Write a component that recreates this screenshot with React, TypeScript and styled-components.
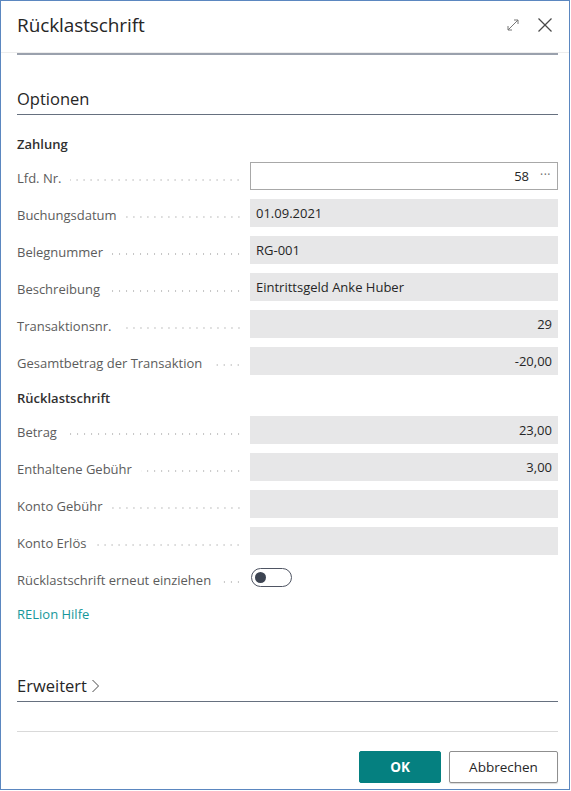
import styled, { createGlobalStyle } from 'styled-components';

const GlobalStyle = createGlobalStyle`
  html, body {
    margin: 0;
    padding: 0;
    background: #ffffff;
  }
  * {
    box-sizing: border-box;
  }
`;

const FONT = `'Open Sans', 'Noto Sans', 'Liberation Sans', sans-serif`;

type Field = {
  label: string;
  value?: string;
  align?: 'left' | 'right';
  kind?: 'lookup' | 'readonly' | 'toggle';
};

const PAYMENT: Field[] = [
  { label: 'Lfd. Nr.', value: '58', align: 'right', kind: 'lookup' },
  { label: 'Buchungsdatum', value: '01.09.2021' },
  { label: 'Belegnummer', value: 'RG-001' },
  { label: 'Beschreibung', value: 'Eintrittsgeld Anke Huber' },
  { label: 'Transaktionsnr.', value: '29', align: 'right' },
  { label: 'Gesamtbetrag der Transaktion', value: '-20,00', align: 'right' },
];

const RETURN_DEBIT: Field[] = [
  { label: 'Betrag', value: '23,00', align: 'right' },
  { label: 'Enthaltene Gebühr', value: '3,00', align: 'right' },
  { label: 'Konto Gebühr', value: '' },
  { label: 'Konto Erlös', value: '' },
  { label: 'Rücklastschrift erneut einziehen', kind: 'toggle' },
];

const Frame = styled.div`
  width: 570px;
  height: 790px;
  border: 1px solid #5b87c0;
  font-family: ${FONT};
  color: #323130;
  display: flex;
  flex-direction: column;
  background: #fff;
`;

const Header = styled.header`
  height: 52px;
  display: flex;
  align-items: center;
  padding: 0 16px 0 16px;
  border-bottom: 1px solid #ededed;
`;

const Title = styled.h1`
  margin: 0;
  flex: 1;
  font-size: 19px;
  font-weight: 400;
  color: #262626;
  letter-spacing: -0.1px;
  margin-top: -4px;
`;

const HeaderIcons = styled.div`
  display: flex;
  align-items: center;
  gap: 16px;
  margin-top: -4px;
`;

const IconButton = styled.span`
  display: inline-flex;
  width: 16px;
  height: 16px;
  align-items: center;
  justify-content: center;
`;

const Rule = styled.div`
  height: 2px;
  background: #9aa1ad;
`;

const Body = styled.main`
  flex: 1;
  padding: 0 11px 0 16px;
  display: flex;
  flex-direction: column;
`;

const HeaderRule = styled(Rule)`
  margin: 0 11px 0 16px;
`;

const SectionTitle = styled.div`
  font-size: 16.5px;
  line-height: 22px;
  color: #262626;
  display: flex;
  align-items: center;
  gap: 4px;
`;

const Section = styled.section<{ $top: number }>`
  margin-top: ${(p) => p.$top}px;
  display: flex;
  flex-direction: column;
`;

const SectionHead = styled.div`
  padding-bottom: 4px;
  border-bottom: 1.5px solid #66707f;
`;

const GroupTitle = styled.div<{ $top: number }>`
  margin-top: ${(p) => p.$top}px;
  margin-bottom: 7px;
  font-size: 13px;
  line-height: 22px;
  font-weight: 600;
  color: #303030;
`;

const Rows = styled.div`
  display: grid;
  grid-template-columns: 233px 1fr;
  grid-auto-rows: 28px;
  row-gap: 9px;
`;

const Label = styled.div`
  display: flex;
  align-items: center;
  font-size: 13px;
  color: #5c5c5c;
  padding-right: 8px;
  white-space: nowrap;
  padding-top: 3px;
`;

const Leader = styled.span`
  flex: 1;
  height: 2px;
  margin-left: 9px;
  margin-top: 4px;
  background-image: radial-gradient(circle, #c4c4c4 0.6px, transparent 0.9px);
  background-size: 7px 2px;
  background-repeat: repeat-x;
  background-position: right center;
`;

const Value = styled.div<{ $align: 'left' | 'right' }>`
  display: flex;
  align-items: center;
  justify-content: ${(p) => (p.$align === 'right' ? 'flex-end' : 'flex-start')};
  padding: 0 6px;
  background: #e7e7e8;
  font-size: 13px;
  color: #262626;
`;

const Lookup = styled.div`
  display: flex;
  align-items: center;
  justify-content: flex-end;
  border: 1px solid #a8a8a8;
  background: #fff;
  padding: 0 6px 0 6px;
  font-size: 13px;
  color: #262626;
  gap: 11px;
`;

const Dots = styled.span`
  color: #6d6d6d;
  font-size: 12px;
  letter-spacing: 0.5px;
  margin-top: -4px;
`;

const ToggleCell = styled.div`
  display: flex;
  align-items: center;
`;

const Toggle = styled.span`
  width: 41px;
  height: 19px;
  border: 1.5px solid #4f5563;
  border-radius: 10px;
  display: flex;
  align-items: center;
  padding-left: 3px;
  margin-left: 1px;
  margin-top: -2px;
`;

const Knob = styled.span`
  width: 11px;
  height: 11px;
  border-radius: 50%;
  background: #3d4452;
`;

const HelpLink = styled.a`
  margin-top: 12px;
  font-size: 13px;
  line-height: 20px;
  color: #17979a;
  text-decoration: none;
`;

const Spacer = styled.div`
  flex: 1;
`;

const Footer = styled.footer`
  margin-top: 29px;
  padding-top: 19px;
  border-top: 1px solid #d9d9d9;
  display: flex;
  justify-content: flex-end;
  gap: 8px;
  padding-bottom: 6px;
`;

const Button = styled.button<{ $primary?: boolean }>`
  height: 32px;
  font-family: ${FONT};
  font-size: 13.5px;
  font-weight: ${(p) => (p.$primary ? 700 : 400)};
  color: ${(p) => (p.$primary ? '#ffffff' : '#262626')};
  background: ${(p) => (p.$primary ? '#058080' : '#ffffff')};
  border: 1px solid ${(p) => (p.$primary ? '#058080' : '#8f8f8f')};
  border-radius: 2px;
  width: ${(p) => (p.$primary ? '82px' : '109px')};
  padding: 0;
  box-shadow: ${(p) => (p.$primary ? 'none' : '0 1px 1px rgba(0,0,0,0.15)')};
`;

const ExpandIcon = () => (
  <svg width="16" height="16" viewBox="0 0 16 16" fill="none" stroke="#777777" strokeWidth="1">
    <path d="M3 13 L13 3" />
    <path d="M9 3 H13 V7" />
    <path d="M3 9 V13 H7" />
  </svg>
);

const CloseIcon = () => (
  <svg width="16" height="16" viewBox="0 0 16 16" fill="none" stroke="#4a4a4a" strokeWidth="1.2">
    <path d="M1.5 1.5 L14.5 14.5" />
    <path d="M14.5 1.5 L1.5 14.5" />
  </svg>
);

const Chevron = () => (
  <svg width="9" height="16" viewBox="0 0 9 16" fill="none" stroke="#4a4a4a" strokeWidth="1">
    <path d="M1.5 2 L7.5 8 L1.5 14" />
  </svg>
);

function FieldRow({ field }: { field: Field }) {
  return (
    <>
      <Label>
        {field.label}
        <Leader />
      </Label>
      {field.kind === 'lookup' ? (
        <Lookup>
          <span>{field.value}</span>
          <Dots>···</Dots>
        </Lookup>
      ) : field.kind === 'toggle' ? (
        <ToggleCell>
          <Toggle>
            <Knob />
          </Toggle>
        </ToggleCell>
      ) : (
        <Value $align={field.align ?? 'left'}>{field.value}</Value>
      )}
    </>
  );
}

export default function App() {
  return (
    <>
      <GlobalStyle />
      <Frame>
        <Header>
          <Title>Rücklastschrift</Title>
          <HeaderIcons>
            <IconButton>
              <ExpandIcon />
            </IconButton>
            <IconButton>
              <CloseIcon />
            </IconButton>
          </HeaderIcons>
        </Header>
        <HeaderRule />
        <Body>
          <Section $top={33}>
            <SectionHead>
              <SectionTitle>Optionen</SectionTitle>
            </SectionHead>
            <GroupTitle $top={18}>Zahlung</GroupTitle>
            <Rows>
              {PAYMENT.map((f) => (
                <FieldRow key={f.label} field={f} />
              ))}
            </Rows>
            <GroupTitle $top={12}>Rücklastschrift</GroupTitle>
            <Rows>
              {RETURN_DEBIT.map((f) => (
                <FieldRow key={f.label} field={f} />
              ))}
            </Rows>
            <HelpLink href="#">RELion Hilfe</HelpLink>
          </Section>
          <Spacer />
          <SectionHead>
            <SectionTitle>
              Erweitert
              <Chevron />
            </SectionTitle>
          </SectionHead>
          <Footer>
            <Button $primary>OK</Button>
            <Button>Abbrechen</Button>
          </Footer>
        </Body>
      </Frame>
    </>
  );
}
